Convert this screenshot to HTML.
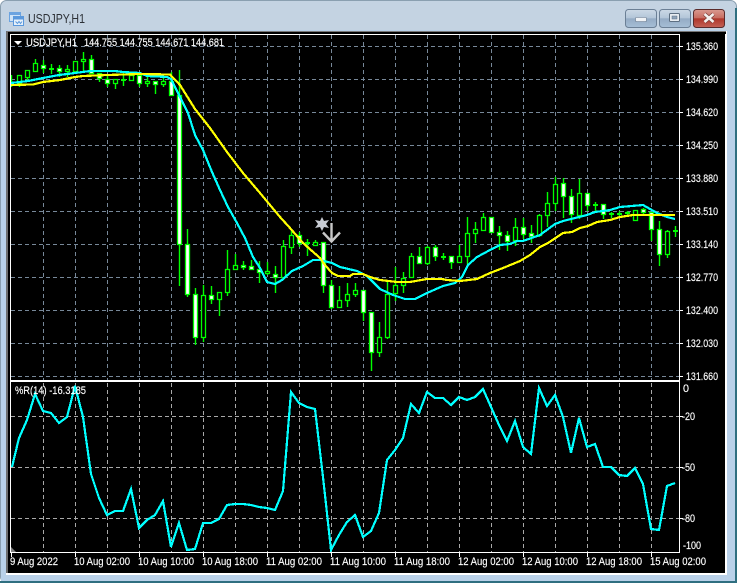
<!DOCTYPE html>
<html>
<head>
<meta charset="utf-8">
<title>USDJPY,H1</title>
<style>
html,body{margin:0;padding:0;width:737px;height:583px;overflow:hidden;background:#fff}
svg{display:block}
text{font-family:"Liberation Sans",sans-serif}
.l{font-size:11px;fill:#fff;stroke:#fff;stroke-width:.15px}
polyline{shape-rendering:crispEdges}
</style>
</head>
<body>
<svg width="737" height="583" viewBox="0 0 737 583" xmlns="http://www.w3.org/2000/svg">
<defs>
<linearGradient id="tb" x1="0" y1="0" x2="0" y2="1"><stop offset="0" stop-color="#c4d3e2"/><stop offset="1" stop-color="#bcd0e5"/></linearGradient>
<linearGradient id="bt" x1="0" y1="0" x2="0" y2="1"><stop offset="0" stop-color="#ccd9e6"/><stop offset="0.48" stop-color="#b2c5d8"/><stop offset="0.5" stop-color="#94abc4"/><stop offset="1" stop-color="#a6bed6"/></linearGradient>
<linearGradient id="cl" x1="0" y1="0" x2="0" y2="1"><stop offset="0" stop-color="#d99a90"/><stop offset="0.48" stop-color="#c76c60"/><stop offset="0.5" stop-color="#ae3529"/><stop offset="1" stop-color="#c46256"/></linearGradient>
</defs>
<!-- window frame -->
<rect x="0.5" y="0.5" width="736" height="582" rx="6" fill="url(#tb)" stroke="#8a9fb0"/>
<rect x="1" y="30" width="734" height="551" fill="#b9d1e9"/>
<rect x="0" y="581" width="737" height="2" fill="#2f6f80"/>
<rect x="735" y="8" width="2" height="575" fill="#2f6f80"/>
<rect x="6" y="31" width="721" height="544" fill="#fff"/>
<rect x="6" y="31" width="719" height="542" fill="#6d6d6d"/>
<rect x="8" y="33" width="717" height="540" fill="#000" />
<rect x="8" y="31" width="718" height="3" fill="#000"/>
<rect x="7" y="31" width="719" height="1" fill="#777"/>
<!-- title -->
<g>
<rect x="9.5" y="12.5" width="11" height="9" fill="#cfe3f7" stroke="#6ba3e0"/>
<rect x="10" y="13" width="10" height="2" fill="#6ba3e0"/>
<rect x="13.5" y="16.5" width="10" height="9" fill="#e6f1fb" stroke="#5a98dc"/>
<rect x="14" y="17" width="9" height="2.5" fill="#5a98dc"/>
<path d="M15.5 21.5l2 2 1.5-2 1.5 2 1.5-2" fill="none" stroke="#5a98dc"/>
</g>
<text x="28" y="23" font-size="13" fill="#2c3036" textLength="57" lengthAdjust="spacingAndGlyphs">USDJPY,H1</text>
<!-- buttons -->
<rect x="625.5" y="9.5" width="31" height="18" rx="3" fill="url(#bt)" stroke="#6b7f95"/>
<rect x="635.5" y="17.5" width="11" height="4" rx="1" fill="#f0f3f6" stroke="#66778a" stroke-width="0.6"/>
<rect x="659.5" y="9.5" width="31" height="18" rx="3" fill="url(#bt)" stroke="#6b7f95"/>
<rect x="669.5" y="13.5" width="10" height="8" rx="1" fill="#e8edf2" stroke="#5d6f82"/>
<rect x="672" y="16" width="5" height="3" fill="#8ea4ba" stroke="#5d6f82" stroke-width="0.5"/>
<rect x="693.5" y="9.5" width="31" height="18" rx="3" fill="url(#cl)" stroke="#5a2b2b"/>
<path d="M704.5 14l9 8M713.5 14l-9 8" fill="none" stroke="#7a3a36" stroke-width="4"/>
<path d="M704.5 14l9 8M713.5 14l-9 8" fill="none" stroke="#f4f1ee" stroke-width="2.6"/>
<!-- grid main -->
<path d="M11 46.5H679M11 79.5H679M11 112.5H679M11 145.5H679M11 178.5H679M11 211.5H679M11 244.5H679M11 277.5H679M11 310.5H679M11 343.5H679M11 376.5H679" stroke="#778899" stroke-dasharray="4 3" fill="none"/>
<path d="M43.5 35V380M75.5 35V380M107.5 35V380M139.5 35V380M171.5 35V380M203.5 35V380M235.5 35V380M267.5 35V380M299.5 35V380M331.5 35V380M363.5 35V380M395.5 35V380M427.5 35V380M459.5 35V380M491.5 35V380M523.5 35V380M555.5 35V380M587.5 35V380M619.5 35V380M651.5 35V380" stroke="#778899" stroke-dasharray="4 3" fill="none"/>
<!-- grid sub -->
<path d="M11 416.5H679M11 467.5H679M11 518.5H679" stroke="#a8a8a8" stroke-dasharray="4 3" fill="none"/>
<path d="M43.5 383V552M75.5 383V552M107.5 383V552M139.5 383V552M171.5 383V552M203.5 383V552M235.5 383V552M267.5 383V552M299.5 383V552M331.5 383V552M363.5 383V552M395.5 383V552M427.5 383V552M459.5 383V552M491.5 383V552M523.5 383V552M555.5 383V552M587.5 383V552M619.5 383V552M651.5 383V552" stroke="#a8a8a8" stroke-dasharray="4 3" fill="none"/>
<!-- wicks -->
<path fill="none" stroke="#00ff00" stroke-width="1.4" d="M11.5 75V87M19.5 75V87M27.5 70V80M35.5 59V71M43.5 60V73M51.5 64V74M59.5 65V77M67.5 65V77M75.5 61V71M83.5 52V71M91.5 55V74M99.5 73V82M107.5 75V87M115.5 79V89M123.5 73V86M131.5 72V80M139.5 75V87M147.5 76V87M155.5 81V94M163.5 75V87M171.5 72V96M179.5 70V286M187.5 229V297M195.5 288V345M203.5 285V342M211.5 286V304M219.5 292V316M227.5 250V296M235.5 254V269M243.5 261V270M251.5 260V269M259.5 261V283M267.5 262V275M275.5 266V293M283.5 240V277M291.5 229V254M299.5 232V247M307.5 239V256M315.5 240V245M323.5 242V293M331.5 280V309M339.5 286V307M347.5 283V307M355.5 283V297M363.5 290V321M371.5 312V371M379.5 322V357M387.5 282V339M395.5 267V301M403.5 272V293M411.5 253V277M419.5 247V263M427.5 246V265M435.5 245V261M443.5 253V260M451.5 256V269M459.5 245V262M467.5 217V267M475.5 222V243M483.5 213V230M491.5 217V232M499.5 226V250M507.5 231V251M515.5 218V246M523.5 218V239M531.5 225V243M539.5 214V237M547.5 192V227M555.5 177V211M563.5 178V218M571.5 189V223M579.5 179V219M587.5 193V211M595.5 202V211M603.5 204V219M611.5 212V218M619.5 211V217M627.5 211V217M635.5 210V220M643.5 208V214M651.5 212V241M659.5 221V266M667.5 230V258M675.5 226V237"/>
<!-- crosses -->
<path fill="none" stroke="#00ff00" stroke-width="2" d="M11 84h3M49 69h5M121 80h5M305 243h5M441 257h5M593 205h5M609 214h5M617 214h5M625 213h5M673 231h5"/>
<!-- white bodies -->
<path fill="#fff" stroke="#00ff00" stroke-width="1.3" d="M41.5 65.5h4v3h-4zM57.5 68.5h4v3h-4zM89.5 59.5h4v14h-4zM97.5 73.5h4v5h-4zM105.5 79.5h4v4h-4zM137.5 75.5h4v8h-4zM153.5 81.5h4v3h-4zM169.5 81.5h4v14h-4zM177.5 95.5h4v149h-4zM185.5 244.5h4v50h-4zM193.5 294.5h4v43h-4zM209.5 295.5h4v4h-4zM241.5 265.5h4v2h-4zM249.5 266.5h4v3h-4zM257.5 269.5h4v3h-4zM273.5 274.5h4v3h-4zM297.5 235.5h4v8h-4zM321.5 242.5h4v43h-4zM329.5 285.5h4v22h-4zM361.5 290.5h4v22h-4zM369.5 312.5h4v40h-4zM417.5 256.5h4v7h-4zM433.5 247.5h4v9h-4zM449.5 256.5h4v6h-4zM489.5 217.5h4v15h-4zM497.5 232.5h4v3h-4zM505.5 235.5h4v6h-4zM521.5 227.5h4v7h-4zM529.5 233.5h4v3h-4zM561.5 183.5h4v13h-4zM569.5 196.5h4v18h-4zM585.5 193.5h4v12h-4zM601.5 204.5h4v10h-4zM641.5 209.5h4v3h-4zM649.5 212.5h4v17h-4zM657.5 229.5h4v25h-4z"/>
<!-- hollow bodies -->
<path fill="#000" stroke="#00ff00" stroke-width="1.3" d="M17.5 75.5h4v8h-4zM25.5 70.5h4v7h-4zM33.5 63.5h4v8h-4zM65.5 69.5h4v2h-4zM73.5 61.5h4v10h-4zM81.5 59.5h4v2h-4zM113.5 79.5h4v4h-4zM129.5 75.5h4v5h-4zM145.5 81.5h4v2h-4zM161.5 81.5h4v3h-4zM201.5 295.5h4v42h-4zM217.5 292.5h4v7h-4zM225.5 269.5h4v23h-4zM233.5 265.5h4v4h-4zM265.5 271.5h4v2h-4zM281.5 246.5h4v31h-4zM289.5 235.5h4v12h-4zM313.5 242.5h4v3h-4zM337.5 300.5h4v7h-4zM345.5 294.5h4v6h-4zM353.5 290.5h4v4h-4zM377.5 337.5h4v15h-4zM385.5 294.5h4v43h-4zM393.5 285.5h4v8h-4zM401.5 278.5h4v7h-4zM409.5 256.5h4v21h-4zM425.5 247.5h4v16h-4zM457.5 256.5h4v6h-4zM465.5 233.5h4v23h-4zM473.5 229.5h4v4h-4zM481.5 217.5h4v13h-4zM513.5 227.5h4v13h-4zM537.5 215.5h4v20h-4zM545.5 203.5h4v12h-4zM553.5 184.5h4v19h-4zM577.5 193.5h4v22h-4zM633.5 210.5h4v10h-4zM665.5 231.5h4v23h-4z"/>
<!-- cyan MA -->
<polyline fill="none" stroke="#00ffff" stroke-width="2.2" points="11,83 28,81 43,78 59,75 75,73 90,71 115,71 123,72 140,73 147,76 167,77 171,79 175,87 180,97 188,113 195,135 203,150 212,172 220,190 228,207 237,223 245,238 253,257 260,268 267,282 275,284 282,280 292,271 303,266 313,260 320,260 332,263 340,267 357,271 367,276 380,289 393,295 405,299 415,299 427,293 443,286 455,283 462,277 468,265 477,257 490,250 500,245 510,244 517,241 523,241 540,235 555,224 563,221 587,215 595,212 610,210 620,207 643,205 657,213 667,217 675,219"/>
<!-- yellow MA -->
<polyline fill="none" stroke="#ffff00" stroke-width="2.2" points="11,85 33,84.5 43,82 60,80 75,77 83,76 107,75 140,74 170,74.5 180,85 195,109 210,128 227,152 243,173 260,193 280,217 290,228 303,243 320,258 325,265 332,273 338,276 350,276 353,274 363,274 370,277 380,280 397,282 410,282 427,279 442,279 447,280 460,281 477,279 490,273 503,268 520,261 530,255 540,247 548,243 557,237 563,233 572,232 580,228 588,226 597,222 610,220 620,217 633,215 640,215 675,215"/>
<!-- sell arrow & star -->
<polygon points="322,217 324,221 329,220 326,224 329,228 324,227 322,231 320,227 315,228 318,224 315,220 320,221" fill="#c8ccd4"/>
<path d="M331.5 223V241M323 232.5L331.5 241.5L340 232.5" fill="none" stroke="#c8c8c8" stroke-width="2.4"/>
<!-- %R line -->
<polyline fill="none" stroke="#00ffff" stroke-width="2.2" points="12,467 19,438 27,420 35,394 43,411 51,413 59,423 67,417 75,386 83,417 91,474 99,498 107,515 115,511 123,511 131,489 139,528 147,520 155,515 163,501 171,547 179,523 187,550 195,549 203,523 211,523 219,519 227,505 235,504 243,504 251,505 259,507 267,508 275,510 283,491 291,392 299,403 307,407 315,409 323,477 331,550 339,535 347,522 355,515 363,537 371,531 379,513 387,460 395,450 403,438 411,404 419,413 427,392 435,398 443,398 451,405 459,397 467,400 475,397 483,389 491,407 499,425 507,441 515,421 523,447 531,454 539,388 547,406 555,395 563,417 571,453 579,418 587,447 595,444 603,467 611,467 619,475 627,476 635,468 643,484 651,529 659,530 667,486 675,483"/>
<!-- frame lines -->
<path fill="none" stroke="#fff" d="M10.5 34.5H679.5V380.5H10.5ZM10.5 381.5H679.5V552.5H10.5Z"/>
<path fill="none" stroke="#fff" d="M680 46.5h3M680 79.5h3M680 112.5h3M680 145.5h3M680 178.5h3M680 211.5h3M680 244.5h3M680 277.5h3M680 310.5h3M680 343.5h3M680 376.5h3M680 416.5h3M680 467.5h3M680 518.5h3M11.5 553v4M75.5 553v4M139.5 553v4M203.5 553v4M267.5 553v4M331.5 553v4M395.5 553v4M459.5 553v4M523.5 553v4M587.5 553v4M651.5 553v4"/>
<polygon points="11,547 16,552 11,552" fill="#808080"/>
<!-- header -->
<polygon points="14,41 22,41 18,45" fill="#fff"/>
<text class="l" x="26" y="46" textLength="51" lengthAdjust="spacingAndGlyphs">USDJPY,H1</text>
<text class="l" x="84" y="46" textLength="140" lengthAdjust="spacingAndGlyphs">144.755 144.755 144.671 144.681</text>
<text class="l" x="15" y="394" textLength="71" lengthAdjust="spacingAndGlyphs">%R(14) -16.3185</text>
<!-- price labels -->
<text class="l" x="686" y="50" textLength="32" lengthAdjust="spacingAndGlyphs">135.360</text>
<text class="l" x="686" y="83" textLength="32" lengthAdjust="spacingAndGlyphs">134.990</text>
<text class="l" x="686" y="116" textLength="32" lengthAdjust="spacingAndGlyphs">134.620</text>
<text class="l" x="686" y="149" textLength="32" lengthAdjust="spacingAndGlyphs">134.250</text>
<text class="l" x="686" y="182" textLength="32" lengthAdjust="spacingAndGlyphs">133.880</text>
<text class="l" x="686" y="215" textLength="32" lengthAdjust="spacingAndGlyphs">133.510</text>
<text class="l" x="686" y="248" textLength="32" lengthAdjust="spacingAndGlyphs">133.140</text>
<text class="l" x="686" y="281" textLength="32" lengthAdjust="spacingAndGlyphs">132.770</text>
<text class="l" x="686" y="314" textLength="32" lengthAdjust="spacingAndGlyphs">132.400</text>
<text class="l" x="686" y="347" textLength="32" lengthAdjust="spacingAndGlyphs">132.030</text>
<text class="l" x="686" y="380" textLength="32" lengthAdjust="spacingAndGlyphs">131.660</text>
<text class="l" x="683" y="392" textLength="6" lengthAdjust="spacingAndGlyphs">0</text>
<text class="l" x="682" y="420" textLength="13" lengthAdjust="spacingAndGlyphs">-20</text>
<text class="l" x="682" y="471" textLength="13" lengthAdjust="spacingAndGlyphs">-50</text>
<text class="l" x="682" y="522" textLength="13" lengthAdjust="spacingAndGlyphs">-80</text>
<text class="l" x="683" y="549" textLength="18" lengthAdjust="spacingAndGlyphs">-100</text>
<!-- time labels -->
<text class="l" x="10" y="565" textLength="48" lengthAdjust="spacingAndGlyphs">9 Aug 2022</text>
<text class="l" x="74" y="565" textLength="56" lengthAdjust="spacingAndGlyphs">10 Aug 02:00</text>
<text class="l" x="138" y="565" textLength="56" lengthAdjust="spacingAndGlyphs">10 Aug 10:00</text>
<text class="l" x="202" y="565" textLength="56" lengthAdjust="spacingAndGlyphs">10 Aug 18:00</text>
<text class="l" x="266" y="565" textLength="56" lengthAdjust="spacingAndGlyphs">11 Aug 02:00</text>
<text class="l" x="330" y="565" textLength="56" lengthAdjust="spacingAndGlyphs">11 Aug 10:00</text>
<text class="l" x="394" y="565" textLength="56" lengthAdjust="spacingAndGlyphs">11 Aug 18:00</text>
<text class="l" x="458" y="565" textLength="56" lengthAdjust="spacingAndGlyphs">12 Aug 02:00</text>
<text class="l" x="522" y="565" textLength="56" lengthAdjust="spacingAndGlyphs">12 Aug 10:00</text>
<text class="l" x="586" y="565" textLength="56" lengthAdjust="spacingAndGlyphs">12 Aug 18:00</text>
<text class="l" x="650" y="565" textLength="56" lengthAdjust="spacingAndGlyphs">15 Aug 02:00</text>
</svg>
</body>
</html>
